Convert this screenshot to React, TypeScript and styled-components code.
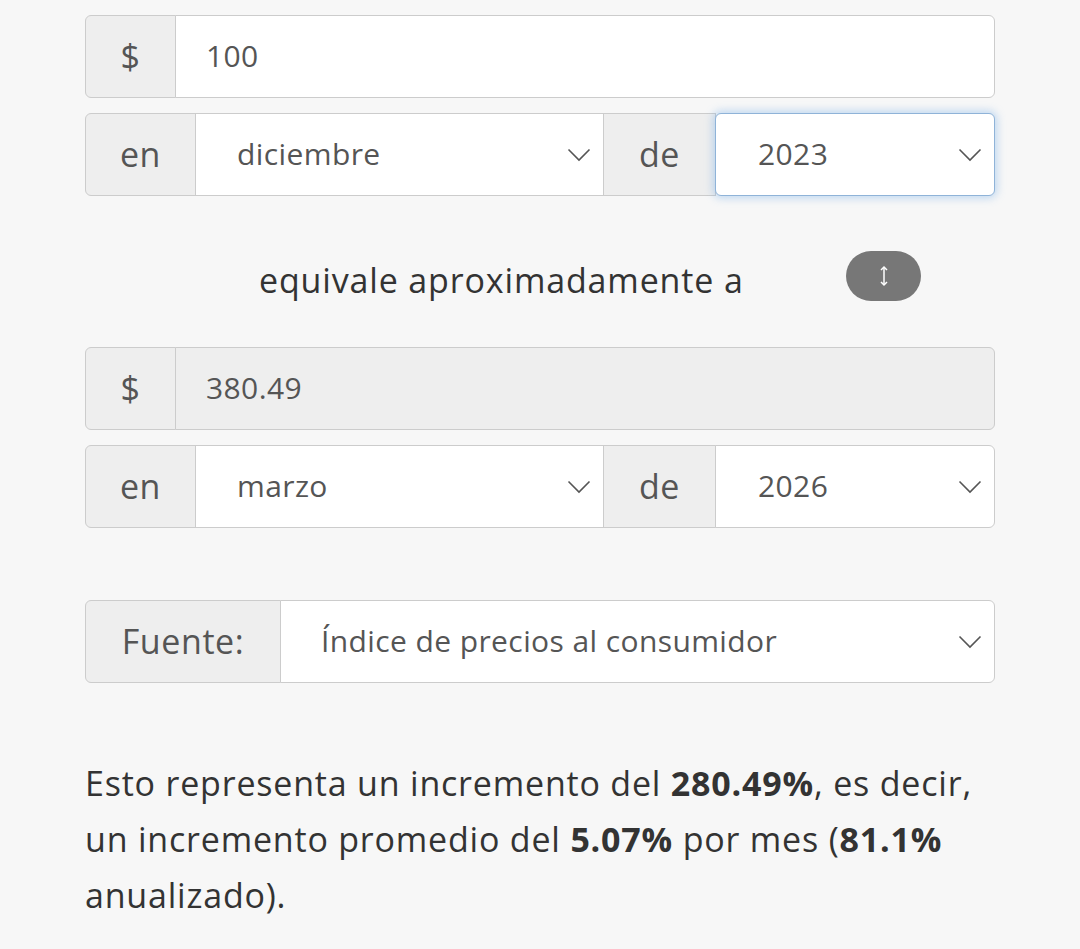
import React from "react";
import styled, { createGlobalStyle, css } from "styled-components";

const Global = createGlobalStyle`
  html, body { margin: 0; padding: 0; background: #f7f7f7; }
  body { font-family: "Open Sans", "Noto Sans", sans-serif; color: #333; }
`;

const Page = styled.div`
  width: 910px;
  margin-left: 85px;
  padding-top: 15px;
  padding-bottom: 20px;
`;

const Group = styled.div<{ $mt?: number }>`
  display: flex;
  height: 83px;
  margin-top: ${(p) => p.$mt ?? 0}px;
`;

const Addon = styled.div<{ $w: number; $first?: boolean }>`
  flex: 0 0 ${(p) => p.$w}px;
  box-sizing: border-box;
  display: flex;
  align-items: center;
  justify-content: center;
  padding-bottom: 2px;
  background: #eeeeee;
  border: 1px solid #cccccc;
  color: #555;
  font-size: 34px;
  letter-spacing: 0.6px;
  margin-left: ${(p) => (p.$first ? 0 : -1)}px;
  border-radius: ${(p) => (p.$first ? "6px 0 0 6px" : "0")};
`;

const Field = styled.div<{ $last?: boolean; $disabled?: boolean; $focus?: boolean; $pl?: number; $w?: number }>`
  ${(p) => (p.$w ? css`flex: 0 0 ${p.$w}px;` : css`flex: 1 1 auto;`)}
  position: relative;
  box-sizing: border-box;
  display: flex;
  align-items: center;
  padding-left: ${(p) => p.$pl ?? 30}px;
  padding-right: 12px;
  padding-bottom: 2px;
  background: ${(p) => (p.$disabled ? "#eeeeee" : "#ffffff")};
  border: 1px solid #cccccc;
  margin-left: -1px;
  color: #555;
  font-size: 30px;
  letter-spacing: 0.4px;
  border-radius: ${(p) => (p.$last ? "0 6px 6px 0" : "0")};
  ${(p) =>
    p.$focus &&
    css`
      z-index: 1;
      border-color: #8fb3d8;
      border-radius: 6px;
      box-shadow: 0 0 8px 2px rgba(102, 165, 230, 0.4);
    `}
`;

const Value = styled.span`
  flex: 1 1 auto;
`;

const ChevronBox = styled.span`
  display: flex;
  padding-top: 2px;
`;

const Chevron = () => (
  <ChevronBox>
    <svg width="24" height="14" viewBox="0 0 24 14" fill="none">
      <polyline points="1.5,1.5 12,12 22.5,1.5" stroke="#555" strokeWidth="1.6" />
    </svg>
  </ChevronBox>
);

const Middle = styled.div`
  display: flex;
  align-items: center;
  height: 50px;
  margin-top: 55px;
  margin-bottom: 46px;
`;

const Equiv = styled.div`
  margin-left: 174px;
  padding-top: 7px;
  font-size: 34px;
  letter-spacing: 0.85px;
  color: #333;
`;

const Swap = styled.button`
  margin-left: auto;
  margin-right: 74px;
  width: 75px;
  height: 50px;
  border: none;
  border-radius: 25px;
  background: #777777;
  display: flex;
  align-items: center;
  justify-content: center;
  padding: 0;
`;

const Para = styled.p`
  margin: 72px 0 0 0;
  font-size: 34px;
  line-height: 56px;
  letter-spacing: 0.8px;
  color: #333;
  b { font-weight: 700; }
`;

const SelectField = ({ value, ...rest }: { value: string; last?: boolean; focus?: boolean; w?: number; pl?: number }) => (
  <Field $last={rest.last} $focus={rest.focus} $w={rest.w} $pl={rest.pl}>
    <Value>{value}</Value>
    <Chevron />
  </Field>
);

export default function App() {
  return (
    <Page>
      <Global />
      <Group>
        <Addon $w={91} $first>$</Addon>
        <Field $last>100</Field>
      </Group>
      <Group $mt={15}>
        <Addon $w={111} $first>en</Addon>
        <SelectField value="diciembre" w={409} pl={41} />
        <Addon $w={113}>de</Addon>
        <SelectField value="2023" last focus pl={42} />
      </Group>
      <Middle>
        <Equiv>equivale aproximadamente a</Equiv>
        <Swap aria-label="intercambiar">
          <svg width="12" height="22" viewBox="0 0 12 22" fill="none">
            <line x1="6" y1="2" x2="6" y2="20" stroke="#fff" strokeWidth="1.5" />
            <polyline points="3,5 6,2 9,5" stroke="#fff" strokeWidth="1.5" />
            <polyline points="3,17 6,20 9,17" stroke="#fff" strokeWidth="1.5" />
          </svg>
        </Swap>
      </Middle>
      <Group>
        <Addon $w={91} $first>$</Addon>
        <Field $last $disabled>380.49</Field>
      </Group>
      <Group $mt={15}>
        <Addon $w={111} $first>en</Addon>
        <SelectField value="marzo" w={409} pl={41} />
        <Addon $w={113}>de</Addon>
        <SelectField value="2026" last pl={42} />
      </Group>
      <Group $mt={72}>
        <Addon $w={196} $first>Fuente:</Addon>
        <SelectField value="Índice de precios al consumidor" last pl={40} />
      </Group>
      <Para>
        Esto representa un incremento del <b>280.49%</b>, es decir, un incremento promedio del <b>5.07%</b> por mes (
        <b>81.1%</b> anualizado).
      </Para>
    </Page>
  );
}
